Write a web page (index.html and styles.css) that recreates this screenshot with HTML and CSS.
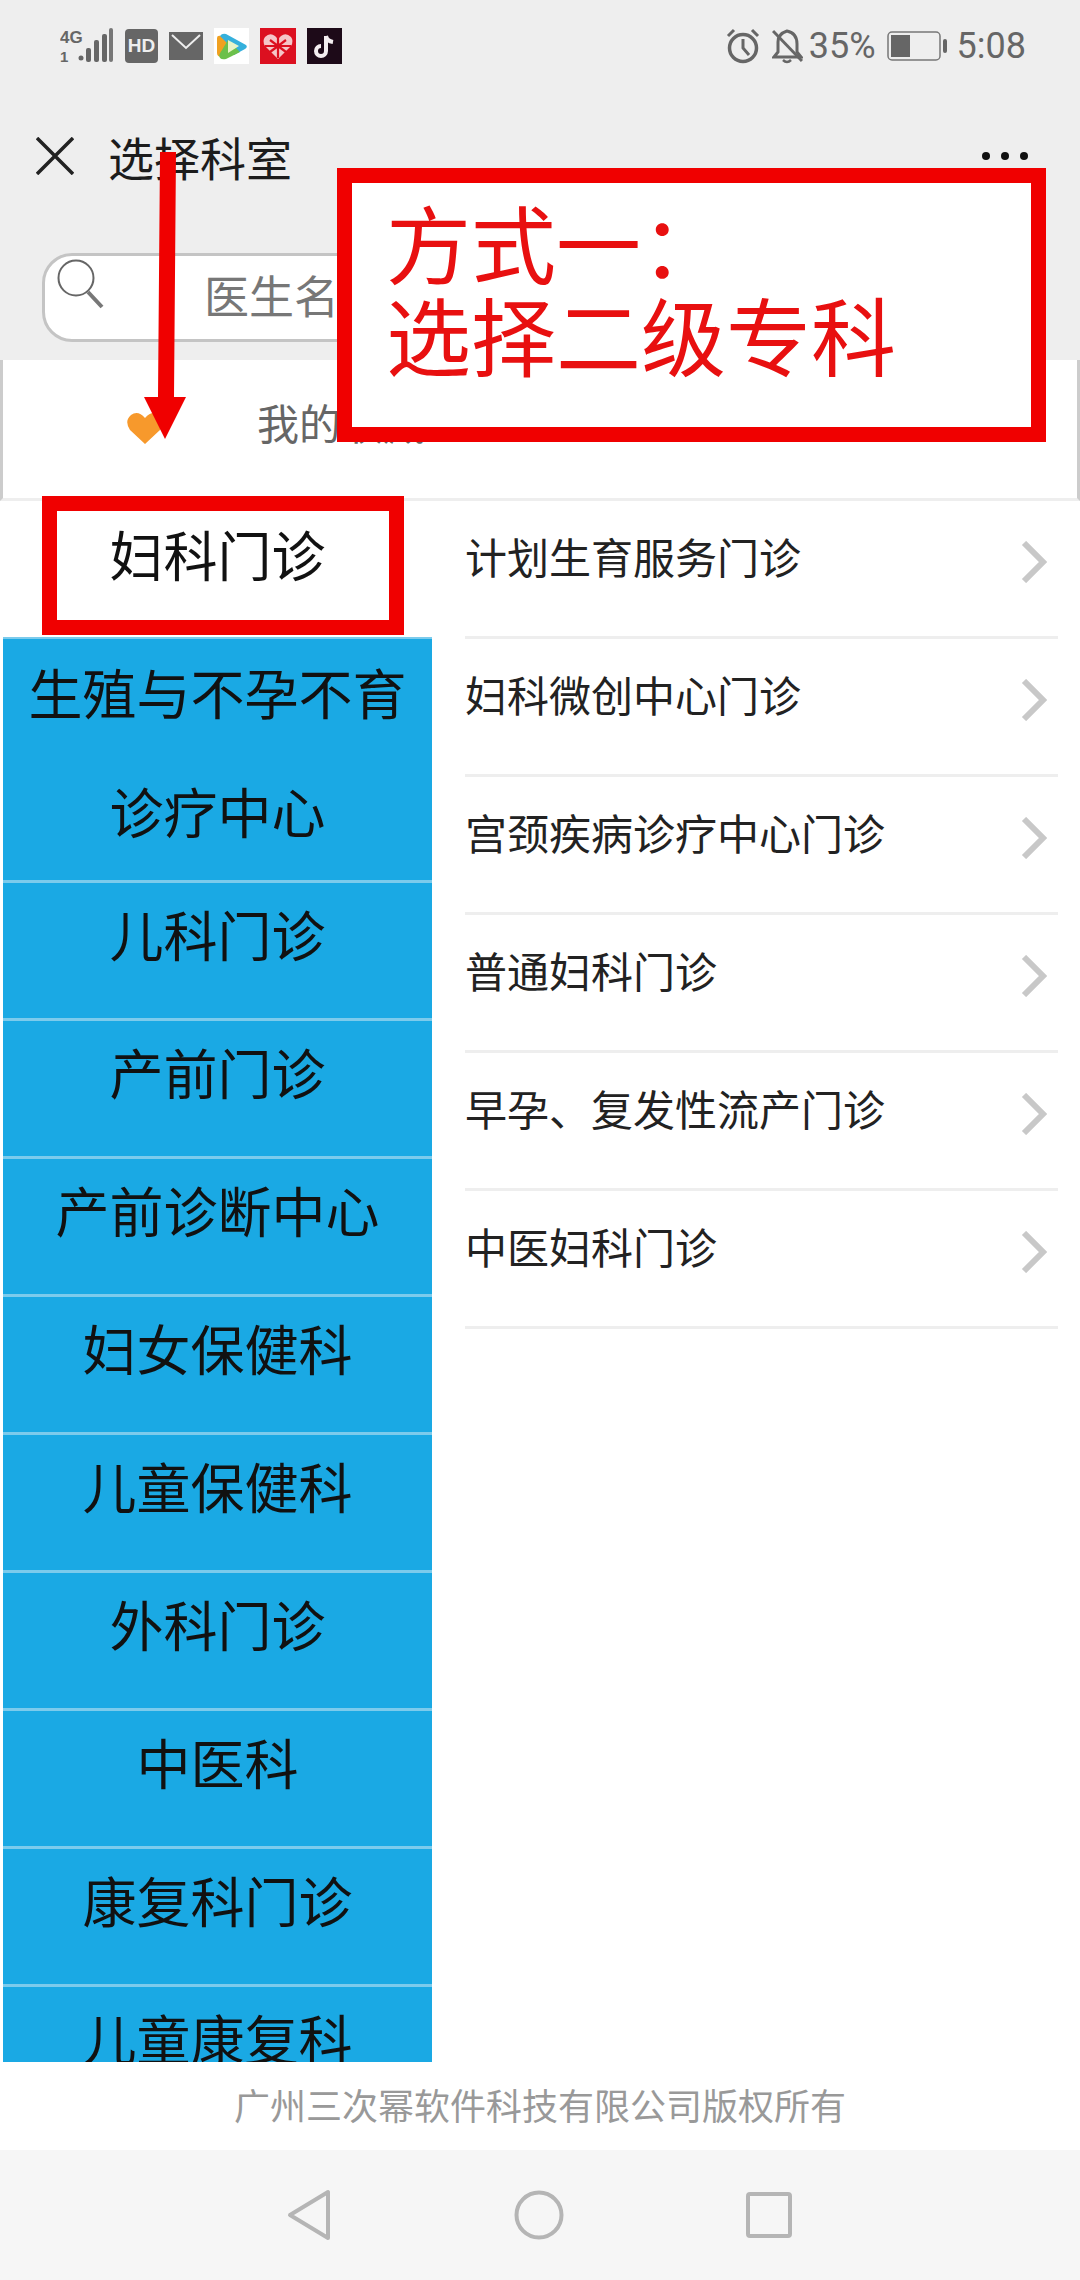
FILE: index.html
```html
<!DOCTYPE html>
<html lang="zh-CN">

<head>
    <meta charset="UTF-8">
    <title>选择科室</title>
    <link rel="stylesheet" href="styles.css">
</head>

<body>
    <div class="top">
        <div class="status">
            <div class="status-left">
                <svg class="ic-signal" width="54" height="36" viewBox="0 0 54 36">
                    <text x="0" y="15" class="sig-a">4G</text>
                    <text x="0" y="34" class="sig-b">1</text>
                    <circle cx="21" cy="30" r="2.5" fill="#666"/>
                    <rect x="26" y="20" width="5" height="14" rx="2" fill="#666"/>
                    <rect x="34" y="12" width="5" height="22" rx="2" fill="#666"/>
                    <rect x="42" y="6" width="5" height="28" rx="2" fill="#666"/>
                    <rect x="49" y="0" width="4" height="34" rx="2" fill="#777"/>
                </svg>
                <svg width="33" height="34" viewBox="0 0 33 34">
                    <rect width="33" height="34" rx="4" fill="#666"/>
                    <text x="16.5" y="23" text-anchor="middle" class="hd">HD</text>
                </svg>
                <svg width="34" height="28" viewBox="0 0 34 28">
                    <rect width="34" height="28" fill="#666"/>
                    <path d="M3 3 L17 16 L31 3" fill="none" stroke="#eee" stroke-width="2"/>
                </svg>
                <svg width="35" height="36" viewBox="0 0 35 36">
                    <rect width="35" height="36" fill="#fff"/>
                    <path d="M3 10 Q3 7 7 8 L18 12 L8 29 Q3 29 3 25Z" fill="#f0a020"/>
                    <path d="M6 8 Q8 5 12 6 L32 17 Q34 19 31 21 L20 27 L12 14Z" fill="#35b0dc"/>
                    <path d="M6 30 Q4 27 8 22 L14 12 L26 24 L12 31 Q8 32 6 30Z" fill="#6cc04a"/>
                    <path d="M14 12 L25 18 L14 25Z" fill="#e8f4c8"/>
                </svg>
                <svg width="36" height="36" viewBox="0 0 36 36">
                    <rect width="36" height="36" fill="#dc1020"/>
                    <path d="M18 31 L5 18 Q2 13 5 9 Q10 4 15 8 L18 11 L21 8 Q26 4 31 9 Q34 13 31 18Z" fill="#f5c6c8"/>
                    <path d="M10 12 L26 24 M26 12 L10 24 M18 9 V30 M5 18 H31" stroke="#dc1020" stroke-width="2.2"/>
                </svg>
                <svg width="35" height="36" viewBox="0 0 35 36">
                    <rect width="35" height="36" fill="#1d0a18"/>
                    <path d="M19 8 V23 A5 5 0 1 1 14 18 M19 8 Q20 13 26 14" fill="none" stroke="#f4eef0" stroke-width="4"/>
                </svg>
            </div>
            <div class="status-right">
                <svg width="34" height="36" viewBox="0 0 34 36">
                    <circle cx="17" cy="20" r="13.5" fill="none" stroke="#666" stroke-width="3.5"/>
                    <path d="M17 11 V20 L23 27" fill="none" stroke="#666" stroke-width="3"/>
                    <path d="M2 8 L8 2 M32 8 L26 2" stroke="#666" stroke-width="3"/>
                </svg>
                <svg class="ic-bell" width="31" height="36" viewBox="0 0 31 36">
                    <path d="M15 3 Q25 5 25 16 V24 L29 29 H2 L6 24 V14 Q6 6 15 3Z" fill="none" stroke="#666" stroke-width="3"/>
                    <path d="M11 32 Q15 36 19 32" fill="none" stroke="#666" stroke-width="2.5"/>
                    <path d="M1 3 L30 33" stroke="#666" stroke-width="3"/>
                </svg>
                <span class="pct">35%</span>
                <svg class="ic-batt" width="61" height="30" viewBox="0 0 61 30">
                    <rect x="1" y="1" width="52" height="28" rx="4" fill="none" stroke="#777" stroke-width="1.5"/>
                    <rect x="4" y="4" width="19" height="22" fill="#666"/>
                    <rect x="56" y="8" width="4" height="14" rx="2" fill="#666"/>
                </svg>
                <span class="clock">5:08</span>
            </div>
        </div>
        <div class="nav">
            <svg width="38" height="38" viewBox="0 0 38 38">
                <path d="M1 1 L37 37 M37 1 L1 37" stroke="#222" stroke-width="3.5"/>
            </svg>
            <span class="nav-title">选择科室</span>
            <div class="more"><i></i><i></i><i></i></div>
        </div>
        <div class="search-wrap">
            <div class="search">
                <svg width="48" height="50" viewBox="0 0 48 50">
                    <circle cx="20" cy="19" r="17.5" fill="none" stroke="#666" stroke-width="2"/>
                    <path d="M32 33 L46 48" stroke="#777" stroke-width="4"/>
                </svg>
                <span class="search-ph">医生名</span>
            </div>
        </div>
    </div>

    <div class="fav">
        <svg width="38" height="34" viewBox="0 0 38 34">
            <path d="M19 33 L4 19 Q-2 10 5 4 Q12 -1 19 7 Q26 -1 33 4 Q40 10 34 19Z" fill="#f7992c"/>
        </svg>
        <span class="fav-text">我的收藏</span>
    </div>

    <div class="columns">
        <ul class="depts">
            <li class="dept active">妇科门诊</li>
            <li class="dept tall"><span class="two-line">生殖与不孕不育<br>诊疗中心</span></li>
            <li class="dept">儿科门诊</li>
            <li class="dept">产前门诊</li>
            <li class="dept">产前诊断中心</li>
            <li class="dept">妇女保健科</li>
            <li class="dept">儿童保健科</li>
            <li class="dept">外科门诊</li>
            <li class="dept">中医科</li>
            <li class="dept">康复科门诊</li>
            <li class="dept">儿童康复科</li>
        </ul>
        <ul class="subs">
            <li class="sub"><span>计划生育服务门诊</span><svg class="chev" width="26" height="42" viewBox="0 0 26 42"><path d="M3 2 L22 21 L3 40" fill="none" stroke="#c8c8c8" stroke-width="6"/></svg></li>
            <li class="sub"><span>妇科微创中心门诊</span><svg class="chev" width="26" height="42" viewBox="0 0 26 42"><path d="M3 2 L22 21 L3 40" fill="none" stroke="#c8c8c8" stroke-width="6"/></svg></li>
            <li class="sub"><span>宫颈疾病诊疗中心门诊</span><svg class="chev" width="26" height="42" viewBox="0 0 26 42"><path d="M3 2 L22 21 L3 40" fill="none" stroke="#c8c8c8" stroke-width="6"/></svg></li>
            <li class="sub"><span>普通妇科门诊</span><svg class="chev" width="26" height="42" viewBox="0 0 26 42"><path d="M3 2 L22 21 L3 40" fill="none" stroke="#c8c8c8" stroke-width="6"/></svg></li>
            <li class="sub"><span>早孕、复发性流产门诊</span><svg class="chev" width="26" height="42" viewBox="0 0 26 42"><path d="M3 2 L22 21 L3 40" fill="none" stroke="#c8c8c8" stroke-width="6"/></svg></li>
            <li class="sub"><span>中医妇科门诊</span><svg class="chev" width="26" height="42" viewBox="0 0 26 42"><path d="M3 2 L22 21 L3 40" fill="none" stroke="#c8c8c8" stroke-width="6"/></svg></li>
        </ul>
    </div>

    <div class="footer">广州三次幂软件科技有限公司版权所有</div>

    <div class="softkeys">
        <svg width="46" height="52" viewBox="0 0 46 52">
            <path d="M42 3 V49 L4 26Z" fill="none" stroke="#b5b5b5" stroke-width="4" stroke-linejoin="round"/>
        </svg>
        <svg width="50" height="50" viewBox="0 0 50 50">
            <circle cx="25" cy="25" r="22.5" fill="none" stroke="#b5b5b5" stroke-width="4"/>
        </svg>
        <svg width="46" height="46" viewBox="0 0 46 46">
            <rect x="2" y="2" width="42" height="42" rx="2" fill="none" stroke="#b5b5b5" stroke-width="4"/>
        </svg>
    </div>

    <!-- red marks drawn on top of the screenshot -->
    <div class="note-box">方式一：<br>选择二级专科</div>
    <div class="note-frame"></div>
    <svg class="note-arrow" width="44" height="290" viewBox="0 0 44 290">
        <path d="M17 0 H33 L31 245 H43 L22 287 L1 245 H15Z" fill="#f00000"/>
    </svg>
</body>

</html>
```

FILE: styles.css
```css
* {
    box-sizing: border-box;
}

html,
body {
    margin: 0;
    padding: 0;
}

body {
    position: relative;
    width: 1080px;
    height: 2280px;
    overflow: hidden;
    background: #fff;
    font-family: "Noto Sans CJK SC", "Noto Sans", sans-serif;
    color: #222;
}

ul {
    margin: 0;
    padding: 0;
    list-style: none;
}

svg {
    display: block;
    flex: none;
}

/* top grey part */
.top {
    height: 360px;
    background: #eee;
}

.status {
    height: 90px;
    padding: 28px 54px 0 60px;
    display: flex;
    justify-content: space-between;
    align-items: flex-start;
}

.status-left,
.status-right {
    display: flex;
    align-items: center;
    height: 36px;
}

.status-left {
    gap: 11px;
}

.sig-a,
.sig-b {
    font-family: "Liberation Sans", sans-serif;
    font-weight: 700;
    fill: #666;
}

.sig-a {
    font-size: 17px;
}

.sig-b {
    font-size: 15px;
}

.hd {
    font-family: "Liberation Sans", sans-serif;
    font-weight: 700;
    font-size: 19px;
    fill: #eee;
}

.ic-bell {
    margin-left: 12px;
}

.pct,
.clock {
    font-family: Roboto, sans-serif;
    font-size: 36px;
    color: #666;
    line-height: 36px;
}

.pct {
    margin-left: 6px;
}

.ic-batt {
    margin-left: 11px;
}

.clock {
    margin-left: 9px;
}

.nav {
    height: 132px;
    padding: 0 52px 0 36px;
    display: flex;
    align-items: center;
}

.nav-title {
    margin-left: 34px;
    font-size: 46px;
    line-height: 60px;
    color: #1c1c1c;
}

.more {
    margin-left: auto;
    display: flex;
    gap: 11px;
}

.more i {
    display: block;
    width: 8px;
    height: 8px;
    border-radius: 50%;
    background: #111;
}

.search-wrap {
    padding: 31px 40px 0 42px;
}

.search {
    height: 89px;
    padding: 0 0 0 11px;
    display: flex;
    align-items: flex-start;
    background: #fff;
    border: 3px solid #c4c4c4;
    border-radius: 30px;
}

.search svg {
    margin-top: 3px;
}

.search-ph {
    margin-left: 100px;
    font-size: 45px;
    line-height: 78px;
    color: #777;
}

/* favourites row */
.fav {
    height: 141px;
    padding: 51px 0 0 123px;
    display: flex;
    align-items: flex-start;
    border-left: 3px solid #ccc;
    border-right: 3px solid #ccc;
    border-bottom: 3px solid #eee;
}

.fav-text {
    margin-left: 93px;
    margin-top: -19px;
    font-size: 42px;
    line-height: 60px;
    color: #666;
}

/* two columns */
.columns {
    height: 1561px;
    display: flex;
    overflow: hidden;
}

.depts {
    width: 429px;
    margin-left: 3px;
    flex: none;
}

.dept {
    height: 138px;
    padding-top: 17px;
    font-size: 54px;
    line-height: 68px;
    text-align: center;
    color: #111;
    background: #1aa9e4;
    border-bottom: 3px solid #7ccbec;
}

.dept.active {
    height: 136px;
    padding-top: 19px;
    background: #fff;
    border-bottom: none;
}

.dept.tall {
    height: 246px;
    padding-top: 0;
    line-height: 119px;
    border-top: 2px solid #7ccbec;
}

.two-line {
    display: block;
    margin-top: -7px;
}

.subs {
    flex: 1;
    padding: 0 22px 0 33px;
}

.sub {
    height: 138px;
    padding-right: 11px;
    display: flex;
    align-items: center;
    justify-content: space-between;
    border-bottom: 3px solid #eee;
    font-size: 42px;
    line-height: 60px;
    color: #222;
}

.sub span {
    margin-top: -26px;
}

.chev {
    margin-top: -14px;
}

/* footer */
.footer {
    height: 88px;
    padding-top: 17px;
    text-align: center;
    font-size: 36px;
    line-height: 50px;
    color: #999;
}

.softkeys {
    height: 130px;
    padding-left: 286px;
    display: flex;
    align-items: center;
    background: #f6f6f6;
    gap: 182px;
}

/* annotations */
.note-box {
    position: absolute;
    left: 337px;
    top: 168px;
    width: 709px;
    height: 274px;
    padding: 12px 0 0 34px;
    background: #fff;
    border: 15px solid #f00000;
    font-size: 85px;
    line-height: 92px;
    font-weight: 400;
    color: #e81010;
}

.note-frame {
    position: absolute;
    left: 42px;
    top: 496px;
    width: 362px;
    height: 139px;
    border: 15px solid #f00000;
}

.note-arrow {
    position: absolute;
    left: 143px;
    top: 152px;
}
```
